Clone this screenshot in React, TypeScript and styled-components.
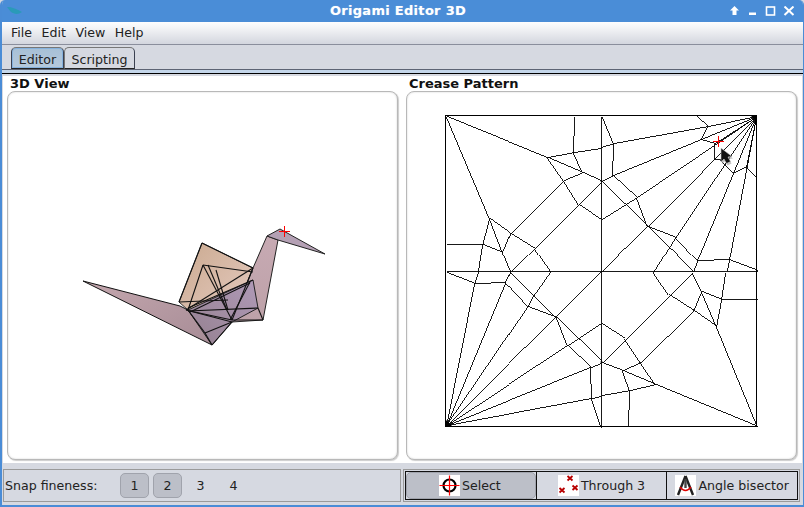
import React from "react";
import styled, { createGlobalStyle } from "styled-components";

const Global = createGlobalStyle`
  html, body { margin: 0; padding: 0; background: #d6d9e1; }
  body { font-family: "DejaVu Sans", sans-serif; font-size: 12.6px; color: #1c1c1c; }
  * { box-sizing: border-box; }
`;

const Frame = styled.div`
  width: 804px; height: 507px; display: flex; flex-direction: column; overflow: hidden;
  background: #d6d9e1; border: 1px solid #4a8cd6; border-top: 0; border-bottom-width: 2px;
  border-left-width: 2px; border-radius: 5px 5px 0 0;
`;
const TitleBar = styled.div`
  height: 22px; margin: 0 -1px 0 -2px; flex: none; background: #4a8dd7; color: #fff; display: flex; align-items: center;
  justify-content: space-between; padding: 0 9px 0 7px; position: relative;
  font-weight: bold; font-size: 13px; letter-spacing: 0.3px;
`;
const TitleText = styled.span`
  position: absolute; left: 0; right: 8px; top: 3px; text-align: center; text-shadow: 0 0 1px rgba(255,255,255,.4);
`;
const WindowControls = styled.div`display: flex; gap: 7px; align-items: center;`;
const MenuBar = styled.div`
  height: 23px; flex: none; display: flex; align-items: center; gap: 9.500px; padding: 0 0 2px 9px;
  background: linear-gradient(#fdfdfe, #f4f5f7 25%, #d3d6de 100%); border-bottom: 1px solid #8a8e9c;
`;
const MenuItem = styled.span`font-size: 12.6px; color: #222;`;
const TabStrip = styled.div`
  height: 25px; flex: none; display: flex; align-items: flex-end; padding-left: 9px; border-bottom: 1px solid #5d6474;
`;
const Tab = styled.div<{ $active?: boolean }>`
  height: 22px; padding-top: 2px; display: flex; align-items: center; justify-content: center; font-size: 12.6px; color: #222;
  width: ${p => (p.$active ? 53 : 71)}px; border: 1px solid #3a4050; border-bottom-color: #222;
  border-left-color: ${p => (p.$active ? "#3a4050" : "#777")}; border-top-color: #777;
  border-radius: 5px 5px 0 0;
  background: ${p => (p.$active ? "linear-gradient(#a7c0d6,#b5c9dc)" : "#d6d9e1")};
  box-shadow: ${p => (p.$active ? "inset 0 0 0 1px #86b2de" : "none")};
`;
const TabRule = styled.div`height: 3px; flex: none; background: #c4d6ea; border-bottom: 0;`;
const BlackRule = styled.div`height: 1px; flex: none; background: #000;`;
const Body = styled.div`
  flex: 1; display: flex; flex-direction: column; padding: 2px 1px 0 1px; min-height: 0;
`;
const Split = styled.div`
  height: 387px; flex: none; background: #fff; display: grid; grid-template-columns: 399px 396px;
  padding-left: 4px;
`;
const Pane = styled.section`display: flex; flex-direction: column; padding-right: 8px;`;
const PaneTitle = styled.h2`
  margin: 0; padding-left: 3px; height: 15px; line-height: 15px; font-size: 13px; font-weight: bold; color: #111;
`;
const Canvas = styled.div`
  width: 391px; height: 369px; border: 1px solid #b8b8b8; border-radius: 8px; background: #fff; overflow: hidden;
  box-shadow: inset 0 0 2px #ccc, 1px 1px 1px #ccc;
`;
const Drawing = styled.svg`display: block; margin: -1px;`;
const Footer = styled.div`
  flex: none; margin-top: 6px; height: 31px; display: grid; grid-template-columns: 398px 397px; gap: 2px;
`;
const StatusGroup = styled.div`
  border: 1px solid #9a9a9a; display: flex; align-items: center; padding: 1px; background: #d6d9e1;
`;
const SnapLabel = styled.span`width: 115px; font-size: 12.6px; color: #222;`;
const SnapButton = styled.div<{ $on?: boolean }>`
  width: 29px; height: 25px; margin-right: 4px; display: flex; align-items: center; justify-content: center; font-size: 12.6px; color: #222;
  border-radius: 5px; border: 1px solid ${p => (p.$on ? "#a0a3ac" : "transparent")};
  background: ${p => (p.$on ? "#bcbfc8" : "transparent")};
`;
const ToolButton = styled.div<{ $on?: boolean }>`
  width: 132px; height: 29px; display: flex; align-items: center; justify-content: center; font-size: 12.6px; color: #222;
  border: 1px solid #111;
  & + & { margin-left: -1px; }
  padding-right: ${p => (p.$on ? "2px" : "0")};
  background: #d6d9e1;
  position: relative;
  isolation: isolate;
  &::before {
    content: "";
    display: ${p => (p.$on ? "block" : "none")};
    position: absolute; inset: 0; z-index: -1;
    border: 1px solid #a0a3ac; border-radius: 5px; background: #bcbfc8;
  }
`;
const ToolIcon = styled.svg`display: block; background: #fff; flex: none; margin-right: 2px;`;

const creases: string[] = [
  "446,116 547,157 582,172 600,180", "547,157 573,152 600,148", "574,116 573,152 582,172",
  "547,157 563,180 578,204 600,219", "563,180 582,172", "563,180 510,233", "600,182 512,270",
  "446,116 489,218", "489,218 510,233 534,248 550,271", "489,218 502,252 510,271", "502,252 510,233",
  "489,218 482,244 478,271", "446,244 482,244", "482,244 502,252",
  "602,116 613,143 612,175", "600,147 613,143 707,126 756,116", "696,116 707,126 700,139",
  "601,181 612,175 700,139 756,116", "700,139 714,143 714,159 720,159", "612,175 636,197 647,226",
  "601,219 636,197 756,116", "601,181 647,226 693,271", "756,116 647,226 601,271", "647,226 675,237 697,260 693,271",
  "756,116 675,237 653,272", "756,116 733,172 697,260", "756,116 727,270", "697,260 728,259 757,270",
  "733,172 746,166 757,177", "746,166 756,116", "733,172 720,159", "756,116 714,143",
  "446,272 474,283 505,282", "478,271 474,283 446,425", "510,271 505,282 446,425", "505,282 527,306 556,317",
  "550,271 533,295 527,306 446,425", "510,271 556,317 601,361", "446,425 601,271", "556,317 567,345 590,367 591,398",
  "446,425 567,345 600,323", "590,367 600,363", "446,425 590,367", "446,425 591,398 600,396", "591,398 600,425",
  "653,272 668,294 693,310 716,326", "692,272 701,291 716,326 757,426", "701,291 693,310 640,362",
  "725,272 721,299 716,326", "701,291 721,299", "721,299 757,299", "692,272 602,362",
  "601,323 624,338 640,362 655,384 757,426", "601,362 622,370 655,384", "622,370 640,362",
  "622,370 629,390 628,426", "601,395 629,390 655,384",
  "446,271 757,271", "601,116 601,427",
];

const Crease = () => (
  <Drawing width={391} height={369} viewBox="406 91 391 369" aria-hidden>
    <rect x="445.5" y="115.5" width="311" height="311" fill="none" stroke="#000" shapeRendering="crispEdges" />
    <g fill="none" stroke="#000" strokeWidth=".9" shapeRendering="crispEdges" transform="translate(.5 .5)">
      {creases.map((c, i) => <polyline key={i} points={c} />)}
    </g>
    <polygon points="751,116 757,116 757,122" fill="#000" />
    <polygon points="446,420 452,426 446,426" fill="#000" />
    <g fill="#000"><circle cx="601.5" cy="181" r="1" /><circle cx="601.5" cy="362" r="1" /></g>
    <path d="M713 141.500h11M718.500 136v11" stroke="#ff0000" strokeWidth="1" shapeRendering="crispEdges" />
    <path d="M722 150v14l3-3 2.500 4.500 4-2-2.500-4.500 4-.5z" fill="#999" opacity=".6" />
    <path d="M721 148v14l3-3 2.500 4.500 4-2-2.500-4.500 4-.5z" fill="#111" stroke="#ccc" strokeWidth=".6" />
  </Drawing>
);

const wire = [
  [202,243,253,268],[202,243,179,302],[203,265,253,272],[203,265,232,320],[203,265,188,310],[208,265,227,310],
  [186,310,253,268],[186,310,232,322],[188,311,258,308],[258,308,263,320],[253,268,232,320],[250,282,230,320],
  [212,345,205,333],[205,333,232,322],[205,333,188,310],[212,345,232,322],[188,308,253,280],[190,312,250,283],
  [179,302,228,300],[216,270,228,310],[232,320,263,320],[232,320,190,311],
];

const Crane = () => (
  <Drawing width={391} height={369} viewBox="7 91 391 369" aria-hidden>
    <defs>
      <linearGradient id="tan" x1="0" y1="0" x2="1" y2="1"><stop offset="0" stopColor="#caa98f" /><stop offset="1" stopColor="#e6ccc2" /></linearGradient>
      <linearGradient id="wing" x1="0" y1="0" x2="1" y2="1"><stop offset="0" stopColor="#c4a7ae" /><stop offset="1" stopColor="#a78c96" /></linearGradient>
      <linearGradient id="neck" x1="0" y1="0" x2="0" y2="1"><stop offset="0" stopColor="#c7aab3" /><stop offset="1" stopColor="#bda1a8" /></linearGradient>
      <linearGradient id="body" x1="0" y1="1" x2="1" y2="0"><stop offset="0" stopColor="#94808f" /><stop offset="1" stopColor="#b09ab8" /></linearGradient>
    </defs>
    <polygon points="202,243 253,268 232,320 188,310 179,302" fill="url(#tan)" stroke="#333" />
    <polygon points="83,281 180,306 188,310 205,333 212,345" fill="url(#wing)" stroke="#111" />
    <polygon points="267,236 278,240 263,320 232,322 253,268" fill="url(#neck)" stroke="#222" />
    <polygon points="188,310 253,280 258,308 232,322 212,345" fill="url(#body)" stroke="#222" />
    <polygon points="267,236 280,229 325,254 278,240" fill="#b4a0b4" stroke="#222" />
    <g stroke="#111" strokeWidth="1.100" fill="none">
      {wire.map((w, i) => <line key={i} x1={w[0]} y1={w[1]} x2={w[2]} y2={w[3]} />)}
    </g>
    <path d="M279 231.500h11M284.500 226v11" stroke="#ff0000" strokeWidth="1" shapeRendering="crispEdges" />
  </Drawing>
);

const SelectIcon = () => (
  <ToolIcon width={21} height={21} viewBox="0 0 21 21" aria-hidden>
    <circle cx="10.500" cy="10.500" r="6" fill="none" stroke="#000" strokeWidth="2.200" />
    <path d="M.5 10.500h20M10.500.5v20" stroke="#f00" strokeWidth="1.200" />
  </ToolIcon>
);
const ThreeIcon = () => (
  <ToolIcon width={21} height={21} viewBox="0 0 21 21" aria-hidden>
    <path d="M9.500 1l5 4.500m0-4.500l-5 4.500M1.500 13l5 4.500m0-4.500l-5 4.500M14.500 10.500l5 4.500m0-4.500l-5 4.500" stroke="#b80000" strokeWidth="1.800" />
  </ToolIcon>
);
const BisectIcon = () => (
  <ToolIcon width={21} height={21} viewBox="0 0 21 21" aria-hidden>
    <path d="M10.500 1L3 20M10.500 1L18 20" stroke="#222" strokeWidth="2.400" fill="none" />
    <path d="M10.500 4v9" stroke="#444" strokeWidth="2.400" />
    <path d="M5 12q5.500 7 11 0" stroke="#e00000" strokeWidth="1.400" fill="none" />
  </ToolIcon>
);

export default function App() {
  return (
    <Frame>
      <Global />
      <TitleBar>
        <svg width="16" height="8" viewBox="0 0 16 8" aria-hidden>
          <path d="M0 0c5 0 10 2 15 5-4 3-8 2-11 0z" fill="#2a9ab8" />
        </svg>
        <TitleText>Origami Editor 3D</TitleText>
        <WindowControls>
          <svg width="11" height="10" viewBox="0 0 11 10" aria-hidden><path d="M5.500 0L10 4.500H7.500V9h-4V4.500H1z" fill="#fff" /></svg>
          <svg width="11" height="10" viewBox="0 0 11 10" aria-hidden><rect x="2" y="6.500" width="7" height="2.500" fill="#fff" /></svg>
          <svg width="11" height="10" viewBox="0 0 11 10" aria-hidden><rect x="1.500" y="1" width="8" height="8" fill="none" stroke="#fff" strokeWidth="1.600" /></svg>
          <svg width="12" height="10" viewBox="0 0 12 10" aria-hidden><path d="M1.500 0.500l9 8.500m0-8.500l-9 8.500" stroke="#fff" strokeWidth="2" /></svg>
        </WindowControls>
      </TitleBar>
      <MenuBar>
        <MenuItem>File</MenuItem><MenuItem>Edit</MenuItem><MenuItem>View</MenuItem><MenuItem>Help</MenuItem>
      </MenuBar>
      <TabStrip>
        <Tab $active>Editor</Tab>
        <Tab>Scripting</Tab>
      </TabStrip>
      <TabRule />
      <BlackRule />
      <Body>
        <Split>
          <Pane><PaneTitle>3D View</PaneTitle><Canvas><Crane /></Canvas></Pane>
          <Pane><PaneTitle>Crease Pattern</PaneTitle><Canvas><Crease /></Canvas></Pane>
        </Split>
        <Footer>
          <StatusGroup>
            <SnapLabel>Snap fineness:</SnapLabel>
            <SnapButton $on>1</SnapButton>
            <SnapButton $on>2</SnapButton>
            <SnapButton>3</SnapButton>
            <SnapButton>4</SnapButton>
          </StatusGroup>
          <StatusGroup>
            <ToolButton $on><SelectIcon />Select</ToolButton>
            <ToolButton><ThreeIcon />Through 3</ToolButton>
            <ToolButton><BisectIcon />Angle bisector</ToolButton>
          </StatusGroup>
        </Footer>
      </Body>
    </Frame>
  );
}
